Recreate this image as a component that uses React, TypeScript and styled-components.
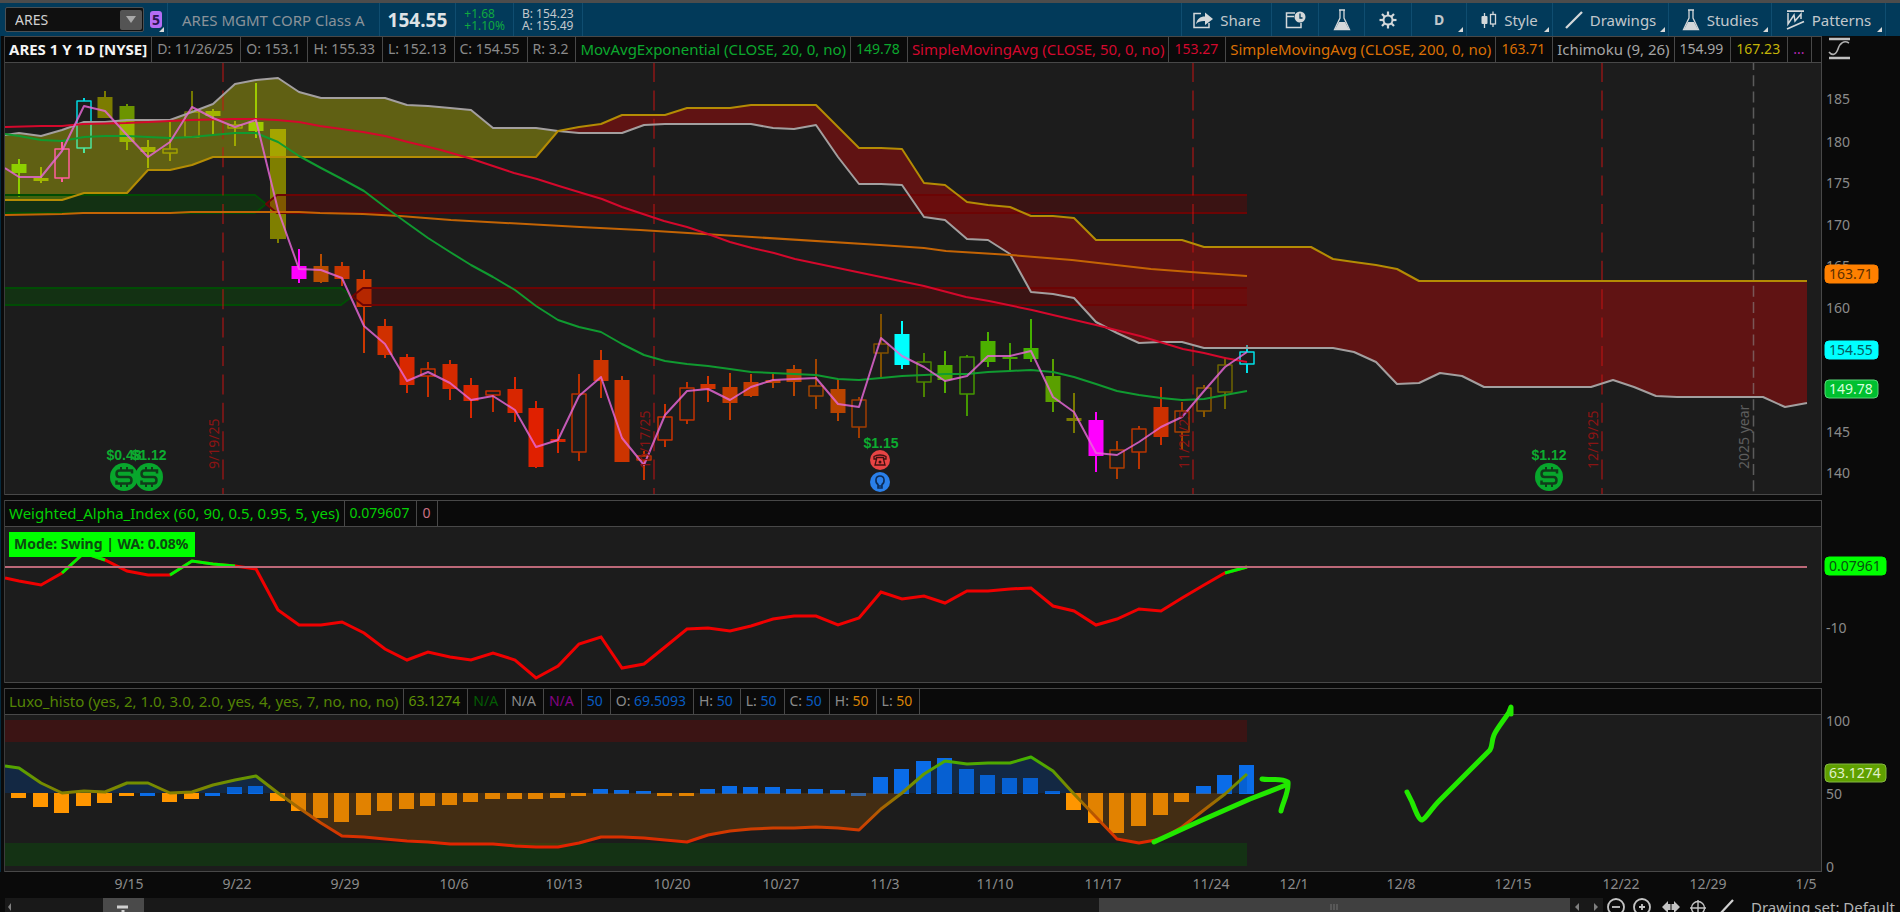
import React from "react";
import styled, { createGlobalStyle } from "styled-components";

const GlobalStyle = createGlobalStyle`
  *, *::before, *::after { box-sizing: border-box; }
  body {
    margin: 0;
    background: #0a0a0a;
    color: #8c8c8c;
    font-family: "Noto Sans", "Open Sans", sans-serif;
    font-size: 14px;
    line-height: 20px;
    overflow: hidden;
  }
  button, input { font: inherit; color: inherit; }
`;

/* ---------- geometry helpers ---------- */

type Pt = [number, number];

const FIRST_BAR = 19.3;
const BAR_STEP = 21.533;
const barX = (i: number) => Math.round(FIRST_BAR + BAR_STEP * i);
const LAST_BAR = barX(57);

const PLOT_LEFT = 5;
const PLOT_WIDTH = 1816;
const pctX = (x: number) => `${((x - PLOT_LEFT) / PLOT_WIDTH) * 100}%`;
const pctY = (y: number, top: number, height: number) => `${((y - top) / height) * 100}%`;
const pts = (list: Pt[]) => list.map((p) => p.join(",")).join(" ");
const series = (start: number, ys: number[]): Pt[] => ys.map((y, k) => [barX(start + k), y]);

/* ---------- layout ---------- */

const Screen = styled.main`
  display: flex;
  flex-direction: column;
  height: 100vh;
  min-height: 700px;
  overflow: hidden;
`;

const TabStrip = styled.div`
  flex: none;
  height: 3px;
  background: #4c4c4c;
`;

const Toolbar = styled.header`
  flex: none;
  display: flex;
  align-items: stretch;
  height: 33px;
  padding-left: 5px;
  padding-right: 14px;
  background: #023a5a;
  color: #c2c8cc;
`;

const ToolGroup = styled.div<{ $pad?: number; $grow?: boolean }>`
  display: flex;
  align-items: center;
  flex: ${(p) => (p.$grow ? "1" : "none")};
  padding: 0 ${(p) => p.$pad ?? 9}px;
  border-right: 1px solid #0f4d70;
`;

const SymbolBox = styled.div`
  display: flex;
  align-items: center;
  align-self: center;
  width: 139px;
  height: 25px;
  padding: 0 1px 0 0;
  background: #101010;
  border: 1px solid #4a5054;
  border-radius: 2px;
`;

const SymbolInput = styled.input`
  flex: 1;
  min-width: 0;
  height: 20px;
  padding: 0 0 0 9px;
  border: 0;
  background: transparent;
  color: #d0d0d0;
`;

const DropButton = styled.button`
  display: flex;
  align-items: center;
  justify-content: center;
  width: 22px;
  height: 20px;
  padding: 0;
  border: 0;
  border-radius: 2px;
  background: #545454;
`;

const LinkButton = styled.button`
  position: relative;
  align-self: stretch;
  width: 24px;
  padding: 0 5px 0 6px;
  border: 0;
  border-right: 1px solid #0f4d70;
  background: transparent;

  &::after {
    content: "";
    position: absolute;
    right: 3px;
    bottom: 4px;
    border-left: 5px solid transparent;
    border-bottom: 5px solid #d8d8d8;
  }
`;

const LinkBadge = styled.span`
  display: block;
  height: 17px;
  border-radius: 3px;
  background: #b46cf5;
  color: #2a1450;
  font-weight: 700;
  line-height: 17px;
  text-align: center;
`;

const CompanyName = styled.span`
  color: #8a9299;
  font-size: 15px;
`;

const LastPrice = styled.strong`
  color: #dfe3e6;
  font-size: 19px;
`;

const PairLines = styled.div<{ $color: string }>`
  color: ${(p) => p.$color};
  font-size: 12px;
  line-height: 12px;
`;

const ToolButton = styled.button<{ $w: number; $menu?: boolean; $bold?: boolean }>`
  position: relative;
  display: flex;
  align-items: center;
  justify-content: center;
  gap: 7px;
  flex: none;
  width: ${(p) => p.$w}px;
  padding: 0;
  border: 0;
  border-right: 1px solid #0f4d70;
  background: transparent;
  color: #c2c8cc;
  font-size: ${(p) => (p.$bold ? 14 : 15)}px;
  font-weight: ${(p) => (p.$bold ? 700 : 400)};

  svg { flex: none; display: block; }

  &::after {
    content: "";
    display: ${(p) => (p.$menu ? "block" : "none")};
    position: absolute;
    right: 3px;
    bottom: 4px;
    border-left: 5px solid transparent;
    border-bottom: 5px solid #d8d8d8;
  }
`;

const Workspace = styled.div`
  flex: 1;
  min-height: 0;
  display: flex;
  flex-direction: column;
  gap: 5px;
  padding-left: 4px;
  border-left: 1px solid #05293d;
`;

const Panel = styled.section<{ $h?: number }>`
  position: relative;
  display: flex;
  flex: ${(p) => (p.$h ? `0 0 ${p.$h}px` : "1 1 0")};
  min-height: 0;
`;

const ChartBox = styled.div`
  flex: 1;
  min-width: 0;
  display: flex;
  flex-direction: column;
  border-top: 1px solid #484848;
  border-bottom: 1px solid #484848;
  border-right: 1px solid #484848;
  box-shadow: -1px 0 0 #3c3c3c;
`;

const StudyBar = styled.div`
  flex: none;
  display: flex;
  height: 26px;
  overflow: hidden;
  border-bottom: 1px solid #484848;
  background: #0a0a0a;
`;

const StudyCell = styled.span<{ $color?: string }>`
  flex: none;
  padding: 0 7px 0 5px;
  border-right: 1px solid #484848;
  color: ${(p) => p.$color ?? "#8a8a8a"};
  line-height: 24px;
  white-space: pre;
`;

const StudyName = styled(StudyCell)<{ $bold?: boolean }>`
  padding: 0 4px;
  font-size: 15px;
  font-weight: ${(p) => (p.$bold ? 700 : 400)};
`;

const Tint = styled.span<{ $color: string }>`
  color: ${(p) => p.$color};
`;

const PlotArea = styled.div`
  position: relative;
  flex: 1;
  min-height: 0;
  background: #1c1c1c;
`;

const Canvas = styled.svg`
  display: block;
  width: 100%;
  height: 100%;
`;

const AxisColumn = styled.div`
  flex: none;
  width: 78px;
`;

const AxisText = styled.text`
  fill: #8a8a8a;
  font-size: 14px;
`;

const ModeLabel = styled.div`
  position: absolute;
  left: 4px;
  top: 5px;
  height: 25px;
  padding: 0 7px 0 5px;
  background: #00ff00;
  color: #0c4a10;
  font-weight: 700;
  line-height: 24px;
`;

const Annotation = styled.svg`
  position: absolute;
  left: 0;
  top: 0;
  width: calc(100% - 79px);
  height: 100%;
  pointer-events: none;
`;

const DateAxis = styled.div`
  flex: none;
  height: 26px;
  margin: 0 79px 0 5px;

  svg { overflow: visible; }
`;

const Footer = styled.footer`
  flex: none;
  display: flex;
  align-items: flex-start;
  height: 14px;
  overflow: hidden;
  padding-left: 5px;
`;

const ScrollTrack = styled.div`
  flex: 1;
  display: flex;
  height: 18px;
  background: #191919;
`;

const ScrollSpace = styled.div<{ $grow: number }>`
  flex: ${(p) => p.$grow} 1 0;
  padding-left: 2px;
`;

const ScrollThumb = styled.div<{ $grow: number; $bg: string }>`
  flex: ${(p) => p.$grow} 1 0;
  display: flex;
  justify-content: center;
  background: ${(p) => p.$bg};
`;

const FooterTools = styled.div`
  flex: none;
  display: flex;
  align-items: center;
  width: 297px;
  height: 18px;
`;

const FooterButton = styled.button<{ $w: number }>`
  display: flex;
  justify-content: center;
  align-items: center;
  width: ${(p) => p.$w}px;
  height: 18px;
  padding: 0;
  border: 0;
  background: transparent;

  svg { flex: none; }
`;

const DrawingSet = styled.span`
  padding-left: 9px;
  color: #b4b4b4;
  font-size: 15px;
  white-space: nowrap;
`;

/* ---------- icons ---------- */

const ICON = "#d4d8da";

const ShareIcon = () => (
  <svg width="21" height="18" viewBox="0 0 21 18">
    <path d="M9 2.5H2V16.5H17V12" fill="none" stroke={ICON} strokeWidth="1.5" />
    <path d="M4 13C5 8 8 5.5 13 5.5V1.5L21 8L13 14V10C9 9.8 6.5 10.5 4 13Z" fill={ICON} />
  </svg>
);

const CalendarIcon = () => (
  <svg width="21" height="18" viewBox="0 0 21 18">
    <path d="M10 2H1.5V16.5H16V12" fill="none" stroke={ICON} strokeWidth="1.5" />
    <path d="M1.5 5.5H9" stroke={ICON} strokeWidth="1.5" />
    <circle cx="15" cy="6" r="5.5" fill={ICON} />
    <path d="M15 2.5V7H17.5" fill="none" stroke="#023a5a" strokeWidth="1.3" />
  </svg>
);

const FlaskIcon = () => (
  <svg width="18" height="22" viewBox="0 0 18 22">
    <path d="M6 1H12M7 1V9L1.5 20.5H16.5L11 9V1" fill="none" stroke={ICON} strokeWidth="1.3" />
    <path d="M6 13L2 20.5H16L12 13Z" fill={ICON} />
  </svg>
);

const GearIcon = () => (
  <svg width="18" height="18" viewBox="0 0 18 18">
    <circle cx="9" cy="9" r="4.5" fill="none" stroke={ICON} strokeWidth="2" />
    {[0, 45, 90, 135, 180, 225, 270, 315].map((a) => (
      <path key={a} d="M9 4V0.5" stroke={ICON} strokeWidth="2.2" transform={`rotate(${a} 9 9)`} />
    ))}
  </svg>
);

const CandlesIcon = () => (
  <svg width="16" height="18" viewBox="0 0 16 18">
    <rect x="0.5" y="5" width="6" height="8" rx="1" fill={ICON} />
    <path d="M3.5 2V17M12 0.5V3M12 13V16" stroke={ICON} strokeWidth="1.3" />
    <rect x="9.5" y="3.5" width="5" height="9.5" fill="none" stroke={ICON} strokeWidth="1.3" />
  </svg>
);

const SlashIcon = () => (
  <svg width="18" height="18" viewBox="0 0 18 18">
    <path d="M1 17L17 1" stroke={ICON} strokeWidth="2.3" />
  </svg>
);

const PatternsIcon = () => (
  <svg width="19" height="20" viewBox="0 0 19 20">
    <path d="M1 1.2H18M1 19L18 11.5" fill="none" stroke={ICON} strokeWidth="1.8" />
    <path d="M2 3V14L8 5L9 11L15 4V9" fill="none" stroke={ICON} strokeWidth="1.5" />
  </svg>
);

/* ---------- price panel data ---------- */

type Candle = {
  top: number;
  bot: number;
  hi: number;
  lo: number;
  color: string;
  hollow?: boolean;
};

const c = (top: number, bot: number, hi: number, lo: number, color: string, hollow = false): Candle => ({
  top, bot, hi, lo, color, hollow,
});

const candles: Candle[] = [
  c(164, 173, 159, 197, "#5cba00"),
  c(178, 181, 167, 183, "#7a9800"),
  c(149, 178, 142, 182, "#ff18e0", true),
  c(101, 148, 98, 153, "#00d8e0", true),
  c(97, 118, 91, 118, "#7c7c00"),
  c(106, 142, 104, 150, "#6c9400"),
  c(147, 152, 140, 168, "#7c9000"),
  c(149, 153, 122, 161, "#787800", true),
  c(112, 137, 91, 137, "#747800", true),
  c(111, 116, 109, 135, "#7a9400"),
  c(125, 128, 121, 146, "#748400", true),
  c(122, 131, 83, 138, "#74b400"),
  c(129, 239, 129, 243, "#7f7f00"),
  c(266, 279, 249, 283, "#ff00ff"),
  c(266, 282, 254, 283, "#b84c00"),
  c(266, 279, 262, 286, "#c83600"),
  c(279, 307, 270, 353, "#cc3800"),
  c(326, 355, 319, 358, "#d03000"),
  c(357, 385, 354, 393, "#d82800"),
  c(369, 376, 362, 397, "#c83000", true),
  c(364, 389, 360, 400, "#d42a00"),
  c(385, 401, 378, 418, "#d82600"),
  c(391, 395, 391, 412, "#c82c00", true),
  c(389, 413, 377, 422, "#d82600"),
  c(408, 467, 401, 468, "#e02000"),
  c(439, 442, 429, 453, "#d82600"),
  c(394, 452, 374, 461, "#b83000", true),
  c(360, 381, 350, 398, "#cc3400"),
  c(380, 462, 376, 462, "#cc3400"),
  c(456, 460, 451, 480, "#c43200", true),
  c(417, 440, 404, 447, "#c83200", true),
  c(388, 420, 382, 424, "#c23200", true),
  c(384, 389, 376, 402, "#d03400"),
  c(387, 403, 373, 420, "#c43c00"),
  c(382, 396, 374, 397, "#c43c00"),
  c(380, 383, 372, 388, "#b84400"),
  c(369, 382, 365, 396, "#b84400"),
  c(386, 396, 359, 409, "#a04400", true),
  c(389, 413, 379, 421, "#b84400"),
  c(400, 427, 397, 438, "#a03c00", true),
  c(344, 353, 314, 377, "#805000", true),
  c(334, 365, 321, 369, "#00ffff"),
  c(362, 382, 353, 397, "#4c8400", true),
  c(365, 380, 351, 393, "#52ac00"),
  c(357, 394, 355, 416, "#449800", true),
  c(341, 362, 332, 367, "#4cb000"),
  c(357, 359, 343, 371, "#44a000"),
  c(348, 359, 319, 362, "#44b000"),
  c(376, 402, 359, 412, "#5aa000"),
  c(418, 421, 393, 433, "#7a7a00"),
  c(420, 456, 412, 472, "#ff00ff"),
  c(450, 468, 441, 479, "#b03c00", true),
  c(429, 452, 426, 469, "#b83400", true),
  c(407, 437, 387, 445, "#cc3000"),
  c(411, 432, 402, 450, "#a84000", true),
  c(388, 411, 385, 417, "#8a5800", true),
  c(365, 392, 357, 409, "#6e6400", true),
  c(352, 364, 345, 373, "#00e0e8", true),
];

const spanA: Pt[] = [
  [5, 135], ...series(0, [133, 136, 130, 122, 122, 120, 120, 120, 112, 104, 84, 80, 78, 92, 98, 98, 98, 98, 105, 106, 108, 110, 128, 128, 128, 131, 133, 133, 133, 125, 124, 124, 124, 124, 124, 128, 129, 125, 157, 184, 184, 185, 217, 220, 239, 240, 254, 292, 294, 298, 322, 333, 343, 342, 342, 348, 348, 348, 348, 348, 348, 348, 352, 362, 384, 383, 373, 376, 387, 387, 387, 387, 387, 387, 380, 387, 396, 397, 397, 397, 397, 397, 407, 403]),
];

const spanB: Pt[] = [
  [5, 200], ...series(0, [200, 200, 200, 193, 193, 193, 170, 170, 165, 157, 157, 157, 157, 157, 157, 157, 157, 157, 157, 157, 157, 157, 157, 157, 157, 131, 127, 124, 115, 115, 115, 108, 108, 108, 105, 105, 105, 105, 127, 148, 148, 149, 183, 185, 202, 205, 207, 216, 216, 218, 240, 240, 240, 240, 240, 247, 247, 247, 247, 247, 247, 259, 262, 265, 269, 281, 281, 281, 281, 281, 281, 281, 281, 281, 281, 281, 281, 281, 281, 281, 281, 281, 281, 281]),
];

const CROSS = 26;
const bullCloud = [...spanA.slice(0, CROSS + 1), ...spanB.slice(0, CROSS + 1).reverse()];
const bearCloud = [...spanA.slice(CROSS), ...spanB.slice(CROSS).reverse()];

const sma50: Pt[] = [
  [5, 127], [41, 126], [62, 126], [83, 124], [126, 123], [170, 121], [191, 120], [234, 119], [255, 119], [277, 120],
  [299, 122], [320, 126], [363, 132], [385, 136], [408, 142], [441, 150], [472, 159], [493, 166], [514, 173],
  [537, 179], [559, 186], [582, 193], [602, 199], [622, 207], [643, 214], [664, 221], [687, 227], [708, 234],
  [730, 242], [752, 248], [774, 253], [795, 259], [838, 268], [881, 277], [924, 286], [966, 297], [989, 301], [1032, 310],
  [1053, 315], [1096, 325], [1140, 336], [1183, 349], [1204, 353], [1225, 358], [LAST_BAR, 362],
];

const ema20: Pt[] = [
  [5, 134], ...series(0, [136, 140, 141, 137, 136, 136, 137, 138, 137, 135, 133, 133, 142, 156, 168, 179, 191, 207, 223, 238, 252, 265, 277, 290, 306, 320, 327, 332, 344, 355, 361, 364, 366, 369, 372, 373, 374, 375, 379, 380, 378, 376, 375, 374, 374, 372, 371, 370, 372, 377, 384, 391, 395, 398, 400, 399, 395, 391]),
];

const sma200: Pt[] = [
  [5, 215], [62, 214], [83, 213], [170, 213], [191, 212], [299, 212], [320, 213], [363, 214], [400, 216], [451, 220],
  [580, 227], [640, 230], [752, 237], [880, 245], [924, 248], [946, 251], [1011, 255], [1072, 260], [1151, 269],
  [1204, 273], [LAST_BAR, 276],
];

const closeLine: Pt[] = [
  [5, 168], ...series(0, [177, 177, 151, 106, 111, 135, 157, 142, 107, 118, 127, 120, 210, 269, 270, 278, 326, 344, 381, 372, 383, 400, 396, 410, 447, 440, 396, 377, 438, 465, 415, 391, 389, 400, 387, 380, 379, 378, 404, 407, 338, 356, 367, 381, 376, 356, 356, 351, 397, 412, 453, 455, 442, 427, 417, 391, 367, 352]),
];

const P1 = { top: 63, height: 431 };
const y1 = (y: number) => pctY(y, P1.top, P1.height);

const expiries = [
  { x: 223, label: "9/19/25" },
  { x: 654, label: "10/17/25" },
  { x: 1193, label: "11/21/25" },
  { x: 1602, label: "12/19/25" },
];

const Zone = ({ top, bottom, turn }: { top: number; bottom: number; turn: number }) => {
  const mid = (top + bottom) / 2;
  const edge = turn - 11;
  return (
    <g strokeWidth="2">
      <polygon points={`5,${top} ${turn - 22},${top} ${edge},${mid} ${turn - 22},${bottom} 5,${bottom}`} fill="#006400" fillOpacity="0.3" />
      <polyline points={`5,${top} ${turn - 22},${top} ${edge},${mid} ${turn - 22},${bottom} 5,${bottom}`} fill="none" stroke="#004c04" />
      <polygon points={`${LAST_BAR},${top} ${turn},${top} ${edge},${mid} ${turn},${bottom} ${LAST_BAR},${bottom}`} fill="#800000" fillOpacity="0.3" />
      <polyline points={`${LAST_BAR},${top} ${turn},${top} ${edge},${mid} ${turn},${bottom} ${LAST_BAR},${bottom}`} fill="none" stroke="#6c0404" />
    </g>
  );
};

const DollarCoin = ({ x, label }: { x: number; label: string }) => (
  <svg x={pctX(x)} y={y1(477)} overflow="visible">
    <text y="-17" textAnchor="middle" fill="#0cac30" fontFamily="Liberation Sans, sans-serif" fontSize="14" fontWeight="700">{label}</text>
    <circle r="14" fill="#08a62c" />
    <path
      d="M8 -3.5V-6.5H-4.5C-8.5 -6.5 -8.5 0 -4.5 0H4.5C8.5 0 8.5 6.5 4.5 6.5H-7.5V3.5"
      fill="none" stroke="#103c1a" strokeWidth="2.5"
    />
    <path d="M-3 -10V-6.5M3 -10V-6.5M-3 6.5V10M3 6.5V10" stroke="#103c1a" strokeWidth="2" />
  </svg>
);

const PricePlot = () => (
  <Canvas role="img" aria-label="ARES daily price chart">
    <svg width="100%" height="100%" viewBox={`${PLOT_LEFT} ${P1.top} ${PLOT_WIDTH} ${P1.height}`} preserveAspectRatio="none" strokeLinejoin="round">
      {candles.map((k, i) => {
        const x = barX(i);
        const w = i === 12 ? 16 : 15;
        return (
          <g key={i} stroke={k.color} fill={k.color}>
            {k.hollow ? (
              <>
                <path d={`M${x} ${k.hi}V${k.top}M${x} ${k.bot}V${k.lo}`} strokeWidth="2" />
                <rect x={x - 7} y={k.top} width="14" height={k.bot - k.top} fill="none" strokeWidth="1.5" />
              </>
            ) : (
              <>
                <path d={`M${x} ${k.hi}V${k.lo}`} strokeWidth="2" />
                <rect x={x - w / 2} y={k.top} width={w} height={k.bot - k.top} stroke="none" />
              </>
            )}
          </g>
        );
      })}
      <polygon points={pts(bullCloud)} fill="#ffff00" fillOpacity="0.3" />
      <polygon points={pts(bearCloud)} fill="#ff0000" fillOpacity="0.3" />
      <Zone top={195} bottom={213} turn={277} />
      <Zone top={288} bottom={305} turn={363} />
      {expiries.map((e) => (
        <path key={e.x} d={`M${e.x} 62V494`} stroke="#c81414" strokeOpacity="0.65" strokeWidth="1.5" strokeDasharray="20 8.4" />
      ))}
      <path d="M1753.5 59V494" stroke="#909090" strokeOpacity="0.55" strokeWidth="1.5" strokeDasharray="11 5.2" />
      <g fill="none">
        <polyline points={pts(spanA)} stroke="#a39f9f" strokeWidth="2" />
        <polyline points={pts(spanB)} stroke="#b48c04" strokeWidth="2" />
        <polyline points={pts(sma200)} stroke="#c46404" strokeWidth="2" />
        <polyline points={pts(sma50)} stroke="#d4082c" strokeWidth="2" />
        <polyline points={pts(ema20)} stroke="#109a30" strokeWidth="2" />
        <polyline points={pts(closeLine)} stroke="#e868d8" strokeOpacity="0.82" strokeWidth="2" />
      </g>
    </svg>
    {expiries.map((e) => (
      <svg key={e.x} x={pctX(e.x - 4)} y={y1(469)} overflow="visible">
        <text transform="rotate(-90)" fill="#8a1414" fontSize="14">{e.label}</text>
      </svg>
    ))}
    <svg x={pctX(1749)} y={y1(469)} overflow="visible">
      <text transform="rotate(-90)" fill="#5e5e5e" fontSize="14">2025 year</text>
    </svg>
    <DollarCoin x={124} label="$0.48" />
    <DollarCoin x={149} label="$1.12" />
    <DollarCoin x={1549} label="$1.12" />
    <svg x={pctX(880)} y={y1(460)} overflow="visible">
      <text y="-12" textAnchor="middle" x="1" fill="#0cac30" fontFamily="Liberation Sans, sans-serif" fontSize="14" fontWeight="700">$1.15</text>
      <circle r="10" fill="#e84444" />
      <path d="M-6 -1V-3.5C-3 -5.5 3 -5.5 6 -3.5V-1H3.5V-2.5H-3.5V-1ZM-3.5 -1L-5 5H5L3.5 -1" fill="none" stroke="#401010" strokeWidth="1.3" />
      <circle r="1.5" cy="2" fill="#401010" />
      <circle r="10" cy="22" fill="#2a80ea" />
      <path d="M-2 24.5C-5 22.5 -5 16 0 16C5 16 5 22.5 2 24.5V28H-2ZM-2 26H2" fill="none" stroke="#0c2c58" strokeWidth="1.6" />
    </svg>
  </Canvas>
);

/* ---------- weighted alpha data ---------- */

const P2 = { top: 527, height: 155 };
const alphaValues = [581, 585, 573, 553, 560, 571, 575, 575, 561, 564, 566, 569, 610, 625, 625, 622, 633, 649, 660, 652, 657, 660, 653, 660, 678, 666, 644, 637, 668, 664, 647, 629, 628, 631, 626, 619, 616, 616, 625, 618, 592, 599, 596, 603, 591, 591, 589, 588, 606, 611, 625, 619, 609, 611, 598, 585, 573, 567];
const alphaLine: Pt[] = [[5, 578], ...series(0, alphaValues)];
const greenRuns: Array<[number, number]> = [[2, 4], [7, 10], [56, 57]];

const AlphaPlot = () => (
  <Canvas role="img" aria-label="Weighted alpha index">
    <svg width="100%" height="100%" viewBox={`${PLOT_LEFT} ${P2.top} ${PLOT_WIDTH} ${P2.height}`} preserveAspectRatio="none">
      <polyline points={pts(alphaLine)} fill="none" stroke="#f00000" strokeWidth="3" />
      {greenRuns.map(([a, b]) => (
        <polyline key={a} points={pts(series(a, alphaValues.slice(a, b + 1)))} fill="none" stroke="#00f400" strokeWidth="3" />
      ))}
      <path d="M5 567H1807" stroke="#bc6878" strokeWidth="2" />
    </svg>
  </Canvas>
);

/* ---------- oscillator data ---------- */

const P3 = { top: 715, height: 156 };
const MID = 793;

const oscValues = [768, 783, 793, 791, 792, 783, 783, 793, 792, 785, 780, 776, 793, 808, 823, 836, 837, 839, 841, 842, 844, 844, 844, 846, 847, 847, 843, 837, 837, 838, 840, 842, 835, 831, 829, 828, 828, 827, 828, 830, 809, 793, 774, 761, 764, 763, 763, 757, 771, 794, 817, 839, 843, 839, 827, 810, 794, 774];
const oscLine: Pt[] = [[5, 766], ...series(0, oscValues)];
const oscArea: Pt[] = [[5, MID], ...oscLine, [LAST_BAR, MID]];

const O = "#ff9600";
const B = "#0a6ce8";
const histogram: Array<[number, string]> = [
  [798, O], [807, O], [813, O], [806, O], [803, O], [796, O], [796, B], [802, O], [799, O], [796, B], [787, B], [786, B],
  [801, O], [811, O], [818, O], [822, O], [815, O], [811, O], [809, O], [806, O], [805, O], [802, O], [799, O], [799, O],
  [799, O], [798, O], [796, O], [789, B], [790, B], [791, B], [796, O], [796, O], [789, B], [786, B], [787, B], [787, B],
  [789, B], [789, B], [790, B], [796, B], [777, B], [769, B], [761, B], [758, B], [769, B], [775, B], [778, B], [778, B],
  [791, B], [810, O], [823, O], [833, O], [826, O], [815, O], [802, O], [786, B], [775, B], [765, B],
];

const OscPlot = () => (
  <Canvas role="img" aria-label="Oscillator histogram">
    <svg width="100%" height="100%" viewBox={`${PLOT_LEFT} ${P3.top} ${PLOT_WIDTH} ${P3.height}`} preserveAspectRatio="none">
      <defs>
        <linearGradient id="osc" gradientUnits="userSpaceOnUse" x1="0" y1="755" x2="0" y2="847">
          <stop offset="0" stopColor="#40b400" />
          <stop offset="0.4" stopColor="#828200" />
          <stop offset="0.7" stopColor="#c44c00" />
          <stop offset="1" stopColor="#e42000" />
        </linearGradient>
        <clipPath id="above"><rect x="5" y="715" width="1816" height={MID - 715} /></clipPath>
        <clipPath id="below"><rect x="5" y={MID} width="1816" height="78" /></clipPath>
      </defs>
      <rect x="5" y="720" width={LAST_BAR - 5} height="22" fill="#3b1414" />
      <rect x="5" y="843" width={LAST_BAR - 5} height="23" fill="#143214" />
      {histogram.map(([y, color], i) => {
        const up = y < MID;
        return <rect key={i} x={barX(i) - 8} y={up ? y : MID} width="15" height={up ? 794 - y : y - MID} fill={color} />;
      })}
      <polygon points={pts(oscArea)} fill="#0046a0" fillOpacity="0.3" clipPath="url(#above)" />
      <polygon points={pts(oscArea)} fill="#a05500" fillOpacity="0.3" clipPath="url(#below)" />
      <polyline points={pts(oscLine)} fill="none" stroke="url(#osc)" strokeWidth="3" strokeLinejoin="round" />
    </svg>
  </Canvas>
);

const dates: Array<[number, string]> = [
  [129, "9/15"], [237, "9/22"], [345, "9/29"], [454, "10/6"], [564, "10/13"], [672, "10/20"], [781, "10/27"], [885, "11/3"],
  [995, "11/10"], [1103, "11/17"], [1211, "11/24"], [1294, "12/1"], [1401, "12/8"], [1513, "12/15"], [1621, "12/22"],
  [1708, "12/29"], [1806, "1/5"],
];

/* ---------- value axes ---------- */

type AxisProps = {
  top: number;
  height: number;
  ticks: Array<[number, string]>;
  badges: Array<{ y: number; text: string; bg: string; fg: string; w: number; edge?: string }>;
};

const ValueAxis = ({ top, height, ticks, badges, children }: React.PropsWithChildren<AxisProps>) => (
  <AxisColumn>
    <Canvas>
      {ticks.map(([y, text]) => (
        <AxisText key={text} x="4" y={pctY(y, top, height)} dy="5">{text}</AxisText>
      ))}
      {badges.map((b) => (
        <svg key={b.text} y={pctY(b.y, top, height)} overflow="visible">
          <rect x="3" y="-9" width={b.w} height="18" rx="4" fill={b.bg} stroke={b.edge ?? b.bg} />
          <text x="7" y="5" fontSize="14" fill={b.fg}>{b.text}</text>
        </svg>
      ))}
      {children}
    </Canvas>
  </AxisColumn>
);

/* ---------- app ---------- */

export default function App() {
  return (
    <>
      <GlobalStyle />
      <Screen>
        <TabStrip />
        <Toolbar>
          <SymbolBox>
            <SymbolInput aria-label="Symbol" defaultValue="ARES" />
            <DropButton aria-label="Choose symbol">
              <svg width="10" height="7"><path d="M0 0H10L5 7Z" fill="#a8a8a8" /></svg>
            </DropButton>
          </SymbolBox>
          <LinkButton aria-label="Symbol link 5"><LinkBadge>5</LinkBadge></LinkButton>
          <ToolGroup $pad={14}><CompanyName>ARES MGMT CORP Class A</CompanyName></ToolGroup>
          <ToolGroup $pad={8}><LastPrice>154.55</LastPrice></ToolGroup>
          <ToolGroup $pad={8}>
            <PairLines $color="#10a840">+1.68<br />+1.10%</PairLines>
          </ToolGroup>
          <ToolGroup $pad={8}>
            <PairLines $color="#c2c8cc">B: 154.23<br />A: 155.49</PairLines>
          </ToolGroup>
          <ToolGroup $grow />
          <ToolButton $w={90}><ShareIcon />Share</ToolButton>
          <ToolButton $w={47} aria-label="Events"><CalendarIcon /></ToolButton>
          <ToolButton $w={46} aria-label="Studies lab"><FlaskIcon /></ToolButton>
          <ToolButton $w={47} aria-label="Settings"><GearIcon /></ToolButton>
          <ToolButton $w={55} $menu $bold>D</ToolButton>
          <ToolButton $w={86} $menu><CandlesIcon />Style</ToolButton>
          <ToolButton $w={116} $menu><SlashIcon />Drawings</ToolButton>
          <ToolButton $w={103} $menu><FlaskIcon />Studies</ToolButton>
          <ToolButton $w={114} $menu><PatternsIcon />Patterns</ToolButton>
        </Toolbar>

        <Workspace>
          <Panel>
            <ChartBox>
              <StudyBar>
                <StudyName $bold $color="#f4f4f4">ARES 1 Y 1D [NYSE]</StudyName>
                <StudyCell>D: 11/26/25</StudyCell>
                <StudyCell>O: 153.1</StudyCell>
                <StudyCell>H: 155.33</StudyCell>
                <StudyCell>L: 152.13</StudyCell>
                <StudyCell>C: 154.55</StudyCell>
                <StudyCell>R: 3.2</StudyCell>
                <StudyName $color="#0ca82e">MovAvgExponential (CLOSE, 20, 0, no)</StudyName>
                <StudyCell $color="#0ca82e">149.78</StudyCell>
                <StudyName $color="#d4082e">SimpleMovingAvg (CLOSE, 50, 0, no)</StudyName>
                <StudyCell $color="#d4082e">153.27</StudyCell>
                <StudyName $color="#dc7004">SimpleMovingAvg (CLOSE, 200, 0, no)</StudyName>
                <StudyCell $color="#dc7004">163.71</StudyCell>
                <StudyName $color="#a4a4a4">Ichimoku (9, 26)</StudyName>
                <StudyCell $color="#a4a4a4">154.99</StudyCell>
                <StudyCell $color="#c4b408">167.23</StudyCell>
                <StudyCell $color="#b428b4">...</StudyCell>
              </StudyBar>
              <PlotArea><PricePlot /></PlotArea>
            </ChartBox>
            <ValueAxis
              top={36}
              height={459}
              ticks={[[99, "185"], [142, "180"], [183, "175"], [225, "170"], [266, "165"], [308, "160"], [432, "145"], [473, "140"]]}
              badges={[
                { y: 274, text: "163.71", bg: "#ff8000", fg: "#5c2e00", w: 53 },
                { y: 350, text: "154.55", bg: "#00ffff", fg: "#045c60", w: 53 },
                { y: 389, text: "149.78", bg: "#00c030", fg: "#d4ffdc", w: 53, edge: "#58d878" },
              ]}
            >
              <path d="M7 3H28M7 22H28" stroke="#c0c0c0" strokeWidth="2.5" />
              <path d="M7 16C10 20 14 19 16 13C18 7 22 4 27 7" fill="none" stroke="#b0b0b0" strokeWidth="1.6" />
            </ValueAxis>
          </Panel>

          <Panel $h={183}>
            <ChartBox>
              <StudyBar>
                <StudyName $color="#04d004">Weighted_Alpha_Index (60, 90, 0.5, 0.95, 5, yes)</StudyName>
                <StudyCell $color="#04d004">0.079607</StudyCell>
                <StudyCell $color="#cc7084">0</StudyCell>
              </StudyBar>
              <PlotArea>
                <AlphaPlot />
                <ModeLabel>Mode: Swing | WA: 0.08%</ModeLabel>
              </PlotArea>
            </ChartBox>
            <ValueAxis
              top={500}
              height={183}
              ticks={[[628, "-10"]]}
              badges={[{ y: 566, text: "0.07961", bg: "#00ff00", fg: "#085010", w: 61 }]}
            />
          </Panel>

          <Panel $h={184}>
            <ChartBox>
              <StudyBar>
                <StudyName $color="#548404">Luxo_histo (yes, 2, 1.0, 3.0, 2.0, yes, 4, yes, 7, no, no, no)</StudyName>
                <StudyCell $color="#609404">63.1274</StudyCell>
                <StudyCell $color="#045c04">N/A</StudyCell>
                <StudyCell>N/A</StudyCell>
                <StudyCell $color="#840484">N/A</StudyCell>
                <StudyCell $color="#085cc0">50</StudyCell>
                <StudyCell>O: <Tint $color="#085cc0">69.5093</Tint></StudyCell>
                <StudyCell>H: <Tint $color="#085cc0">50</Tint></StudyCell>
                <StudyCell>L: <Tint $color="#085cc0">50</Tint></StudyCell>
                <StudyCell>C: <Tint $color="#085cc0">50</Tint></StudyCell>
                <StudyCell>H: <Tint $color="#dc8404">50</Tint></StudyCell>
                <StudyCell>L: <Tint $color="#dc8404">50</Tint></StudyCell>
              </StudyBar>
              <PlotArea><OscPlot /></PlotArea>
            </ChartBox>
            <ValueAxis
              top={688}
              height={184}
              ticks={[[721, "100"], [794, "50"], [867, "0"]]}
              badges={[{ y: 773, text: "63.1274", bg: "#5fa000", fg: "#e0f0c8", w: 61, edge: "#84b840" }]}
            />
            <Annotation viewBox="5 688 1816 184" preserveAspectRatio="none" fill="none" stroke="#22e800" strokeWidth="5" strokeLinecap="round" strokeLinejoin="round">
              <path d="M1154 842L1200 821L1250 799L1286 785" />
              <path d="M1262 779C1270 781 1280 777 1288 782C1289 792 1283 802 1281 811" />
              <path d="M1407 792L1412 802C1416 812 1419 820 1422 820C1426 819 1430 810 1440 800L1490 750C1493 745 1491 742 1494 735C1497 728 1505 719 1509 712L1511 707V714" />
            </Annotation>
          </Panel>
        </Workspace>

        <DateAxis>
          <Canvas>
            {dates.map(([x, label]) => (
              <AxisText key={label} x={pctX(x)} y="17" textAnchor="middle">{label}</AxisText>
            ))}
          </Canvas>
        </DateAxis>

        <Footer>
          <ScrollTrack>
            <ScrollSpace $grow={96}>
              <svg width="6" height="16"><path d="M4 5L1 9L4 13Z" fill="#808080" /></svg>
            </ScrollSpace>
            <ScrollThumb $grow={41} $bg="#4a4a4a">
              <svg width="12" height="16"><path d="M0 9H11M6 12V16" stroke="#d0d0d0" strokeWidth="3" /></svg>
            </ScrollThumb>
            <ScrollSpace $grow={954} />
            <ScrollThumb $grow={472} $bg="#404040">
              <svg width="8" height="16"><path d="M1 6V12M4 6V12M7 6V12" stroke="#707070" /></svg>
            </ScrollThumb>
            <ScrollSpace $grow={31}>
              <svg width="30" height="16"><path d="M7 5L3 9L7 13ZM22 5L26 9L22 13Z" fill="#808080" /></svg>
            </ScrollSpace>
          </ScrollTrack>
          <FooterTools>
            <FooterButton $w={25} aria-label="Zoom out">
              <svg width="18" height="18" fill="none" stroke="#c4c4c4" strokeWidth="1.8"><circle cx="9" cy="9" r="8" /><path d="M5 9H13" /></svg>
            </FooterButton>
            <FooterButton $w={28} aria-label="Zoom in">
              <svg width="18" height="18" fill="none" stroke="#c4c4c4" strokeWidth="1.8"><circle cx="9" cy="9" r="8" /><path d="M6 9H12M9 6V12" /></svg>
            </FooterButton>
            <FooterButton $w={29} aria-label="Pan">
              <svg width="18" height="18"><path d="M0 9L6 3V15ZM18 9L12 3V15Z" fill="#c4c4c4" /><path d="M6 6H12V12H6Z" fill="#c4c4c4" /><path d="M9 3V15" stroke="#0a0a0a" /></svg>
            </FooterButton>
            <FooterButton $w={25} aria-label="Crosshair">
              <svg width="18" height="18" fill="none" stroke="#c4c4c4" strokeWidth="1.4"><circle cx="9" cy="10" r="6.5" /><path d="M1 10H17M9 2V18" /></svg>
            </FooterButton>
            <FooterButton $w={32} aria-label="Draw line">
              <svg width="18" height="18"><path d="M2 17L16 2" stroke="#d0d0d0" strokeWidth="2.2" /></svg>
            </FooterButton>
            <DrawingSet>Drawing set: Default</DrawingSet>
          </FooterTools>
        </Footer>
      </Screen>
    </>
  );
}
